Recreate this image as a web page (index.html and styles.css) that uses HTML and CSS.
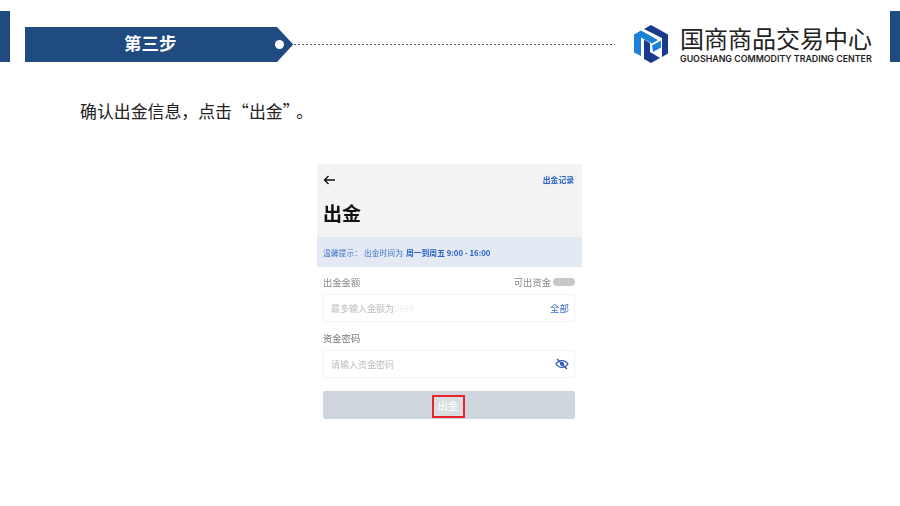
FILE: index.html
```html
<!DOCTYPE html>
<html lang="zh">
<head>
<meta charset="utf-8">
<title>第三步</title>
<link rel="stylesheet" href="styles.css">
</head>
<body>
<div class="slide">
  <header class="top">
    <div class="edge"></div>
    <div class="banner"><span class="banner-text">第三步</span><span class="dot"></span></div>
    <div class="dash"></div>
    <div class="brand">
      <svg class="logo" viewBox="0 0 34 38" width="34" height="38">
        <path fill="#1c3a8c" d="M10 4 17 0l17 9.500v19l-6 3.500V13z"/>
        <path fill="#1c7fd8" d="M0 9.500 7 5.500 24 15l-6 3.500L7 12.500V31l-7-3.500z"/>
        <path fill="#1c3a8c" d="M10 14.500l6 3.500v9l6 3.500 4 2.500-9 5-7-4z"/>
        <path fill="#1c7fd8" d="M18 20.500 27 15.500v7L19 27z"/>
      </svg>
      <div class="brand-text">
        <div class="brand-cn">国商商品交易中心</div>
        <div class="brand-en">GUOSHANG COMMODITY TRADING CENTER</div>
      </div>
    </div>
    <div class="edge edge-right"></div>
  </header>
  <p class="intro">确认出金信息，点击“出金<span class="quote-end">”</span>。</p>
  <main class="phone">
    <section class="phone-head">
      <div class="nav">
        <svg viewBox="0 0 12 10" width="12" height="10"><path d="M5.500 1 1.500 5l4 4M1.500 5H12" fill="none" stroke="#111" stroke-width="1.400"/></svg>
        <span class="record">出金记录</span>
      </div>
      <h1 class="title">出金</h1>
    </section>
    <div class="notice"><span class="tip">温馨提示：</span><span class="tip-light">出金时间为</span><b class="tip-b">周一到周五 9:00 - 16:00</b></div>
    <section class="form">
      <div class="label-row"><span>出金金额</span><span class="avail">可出资金<i class="mask"></i></span></div>
      <div class="field"><span class="ph">最多输入金额为<span class="ph-faint">9999</span></span><span class="all">全部</span></div>
      <div class="label-row label-pwd"><span>资金密码</span></div>
      <div class="field"><span class="ph">请输入资金密码</span>
        <svg class="eye" viewBox="0 0 14 12" width="14" height="12"><path d="M1 6c3-4.500 9-4.500 12 0-3 4.500-9 4.500-12 0z" fill="none" stroke="#2f55b8" stroke-width="1.300"/><circle cx="7" cy="6" r="2" fill="#2f55b8"/><path d="M2 1l10 10" stroke="#2f55b8" stroke-width="1.300"/></svg>
      </div>
      <div class="submit"><span class="submit-text">出金</span></div>
    </section>
  </main>
</div>
</body>
</html>
```
FILE: styles.css
```css
* { box-sizing: border-box; }
html, body { margin: 0; padding: 0; }
body { background: #fff; font-family: "Noto Sans CJK SC", "Liberation Sans", sans-serif; }
.slide { width: 900px; height: 506px; overflow: hidden; }
.top { display: flex; height: 62px; padding-top: 11px; }
.edge { width: 10px; background: #1f4b80; }
.edge-right { margin-left: 17px; }
.banner { position: relative; margin: 16px 0 0 15px; width: 269px; height: 35px; background: #1f4b80; clip-path: polygon(0 0, 252px 0, 100% 50%, 252px 100%, 0 100%); display: flex; align-items: center; padding: 0 0 3px 99px; }
.banner-text { color: #fff; font-size: 17.500px; font-weight: 700; line-height: 1; }
.dot { position: absolute; left: 250px; top: 13px; width: 9px; height: 9px; border-radius: 50%; background: #fff; }
.dash { width: 322px; height: 1px; margin: 33px 0 0 1px; background: repeating-linear-gradient(90deg, #555 0 2px, transparent 2px 4px); }
.brand { display: flex; margin-left: 19px; padding-top: 14px; height: 51px; }
.logo { margin-right: 12px; }
.brand-text { width: 193px; }
.brand-cn { font-size: 24px; line-height: 26px; font-weight: 400; color: #222; white-space: nowrap; }
.brand-en { font-size: 8.830px; line-height: 11px; margin-top: 2px; font-family: "Inter", sans-serif; font-weight: 600; color: #222; white-space: nowrap; }
.intro { margin: 36px 0 0 80px; font-size: 16.900px; line-height: 26px; color: #222; }
.quote-end { margin-right: 5px; }
.phone { width: 265px; margin: 40px 0 0 317px; filter: blur(.35px); }
.phone-head { height: 73px; background: #f3f3f3; padding: 9px 8px 0 6px; }
.nav { display: flex; justify-content: space-between; align-items: center; height: 14px; }
.record { font-size: 7.800px; font-weight: 700; color: #2a62c9; line-height: 14px; }
.title { margin: 12px 0 0; font-size: 19px; line-height: 28px; font-weight: 700; color: #111; }
.notice { height: 30px; background: #e3eaf3; padding-left: 6px; display: flex; align-items: center; font-size: 7.800px; color: #3f73c9; white-space: nowrap; }
.tip { margin-right: 2px; }
.tip-light { margin-right: 3px; }
.tip-b { font-weight: 700; color: #2a62c9; }
.form { padding: 7px 7px 0 6px; background: #fff; }
.label-row { display: flex; justify-content: space-between; align-items: center; height: 15px; font-size: 9.300px; color: #8a8a8a; }
.label-pwd { margin-top: 8px; color: #777; }
.avail { display: flex; align-items: center; }
.mask { width: 22px; height: 8px; margin-left: 2px; border-radius: 4px; background: #c6c6c6; }
.field { display: flex; justify-content: space-between; align-items: center; height: 28px; margin-top: 5px; padding: 0 5px 0 7px; border: 1px solid #f3f3f3; border-radius: 2px; font-size: 9px; }
.ph { color: #bcbcbc; }
.ph-faint { color: #eeeeee; }
.all { color: #3f6fc9; font-size: 9.500px; }
.submit { display: flex; justify-content: center; align-items: center; height: 28px; margin-top: 13px; background: #d0d6dd; border-radius: 2px; }
.submit-text { margin: 2px 2px 0 0; padding: 1px 3px; border: 2px solid #e8262a; color: #fff; font-size: 10.500px; line-height: 16px; width: 33px; height: 23px; text-align: center; background: #d9dee3; }
```
